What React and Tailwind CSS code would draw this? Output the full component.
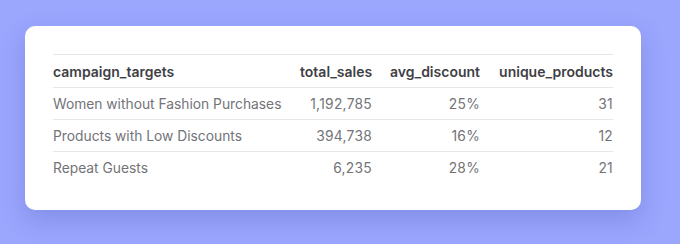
export default function App() {
  const rows = [
    ["Women without Fashion Purchases", "1,192,785", "25%", "31"],
    ["Products with Low Discounts", "394,738", "16%", "12"],
    ["Repeat Guests", "6,235", "28%", "21"],
  ];
  return (
    <div className="w-[680px] h-[244px] bg-[#9ba6fd] pt-[26px] pl-[25px]" style={{ fontFamily: "Inter, 'Liberation Sans', sans-serif" }}>
      <div className="w-[616px] h-[184px] bg-white rounded-[10px] shadow-[0_10px_24px_rgba(60,70,170,0.25)] pt-[28px] px-[28px]">
        <table className="w-[560px] table-fixed border-collapse text-[14px] whitespace-nowrap">
          <thead>
            <tr className="border-t border-b border-[#e5e7eb] h-[33px]">
              <th className="w-[247px] text-left font-semibold text-[#3f3f46] p-0">campaign_targets</th>
              <th className="w-[72px] text-right font-semibold text-[#3f3f46] p-0">total_sales</th>
              <th className="w-[108px] text-right font-semibold text-[#3f3f46] p-0">avg_discount</th>
              <th className="w-[133px] text-right font-semibold text-[#3f3f46] p-0">unique_products</th>
            </tr>
          </thead>
          <tbody>
            {rows.map((r, i) => (
              <tr key={i} className={i < rows.length - 1 ? "border-b border-[#e5e7eb] h-[32px]" : "h-[32px]"}>
                <td className="text-left text-[#737378] p-0 pt-px text-[13.8px]">{r[0]}</td>
                <td className="text-right text-[#737378] p-0 pt-px text-[13.8px] tracking-[0.02em]">{r[1]}</td>
                <td className="text-right text-[#737378] p-0 pt-px text-[13.8px] tracking-[0.02em]">{r[2]}</td>
                <td className="text-right text-[#737378] p-0 pt-px text-[13.8px] tracking-[0.02em]">{r[3]}</td>
              </tr>
            ))}
          </tbody>
        </table>
      </div>
    </div>
  );
}
